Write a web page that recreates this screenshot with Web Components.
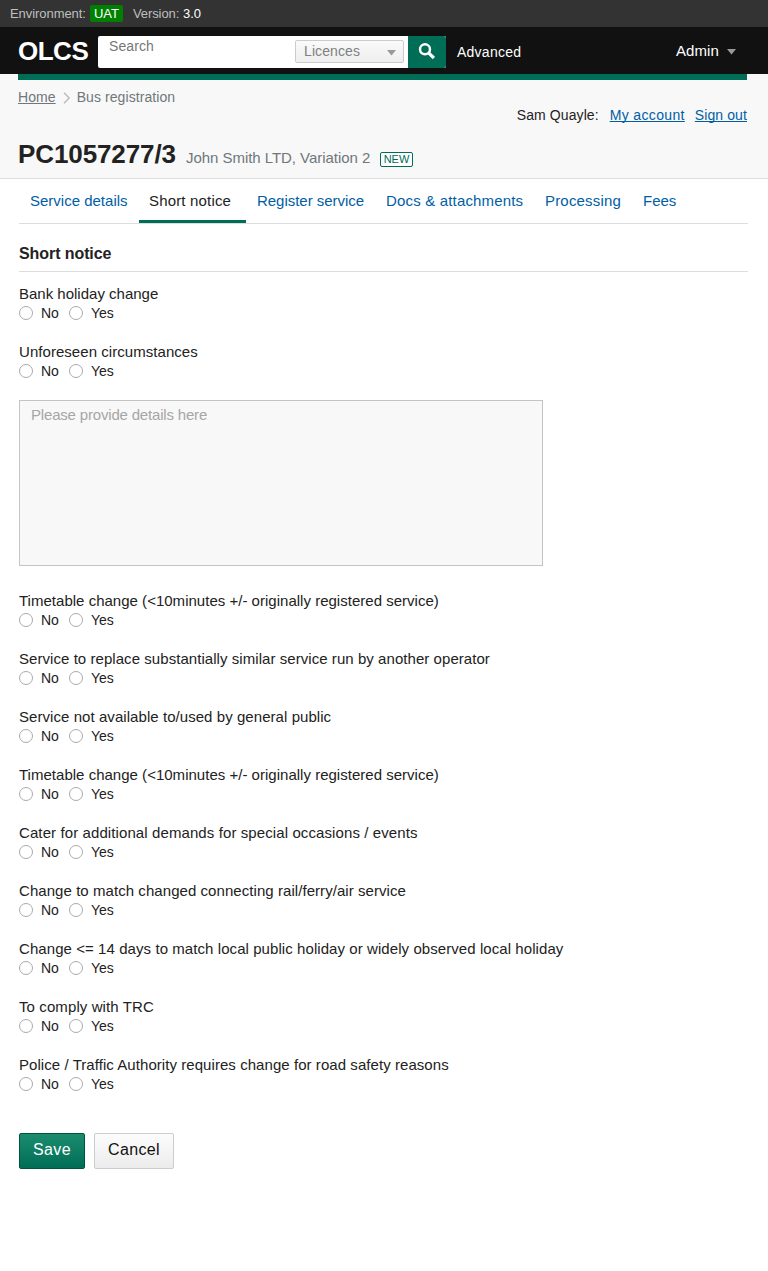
<!DOCTYPE html>
<html lang="en">
<head>
<meta charset="utf-8">
<title>OLCS - Short notice</title>
<style>
html,body{margin:0;background:#fff}
body{font-family:"Liberation Sans",Arial,sans-serif;font-size:15px;line-height:20px;color:#222;min-height:1271px}
</style>
</head>
<body>
<env-bar environment="UAT" version="3.0"></env-bar>
<site-header></site-header>
<page-intro></page-intro>
<nav-tabs>
<nav-tab style="--w:120px">Service details</nav-tab>
<nav-tab style="--w:107px;--ls:.17px" active>Short notice</nav-tab>
<nav-tab style="--w:129px;--ls:-.03px">Register service</nav-tab>
<nav-tab style="--w:159px;--ls:.17px">Docs &amp; attachments</nav-tab>
<nav-tab style="--w:98px;--ls:.18px">Processing</nav-tab>
<nav-tab style="--w:60px">Fees</nav-tab>
</nav-tabs>
<notice-form heading="Short notice">
<radio-field>Bank holiday change</radio-field>
<radio-field style="--ls:.05px">Unforeseen circumstances</radio-field>
<text-box placeholder="Please provide details here"></text-box>
<radio-field style="--ls:.016px">Timetable change (&lt;10minutes +/- originally registered service)</radio-field>
<radio-field style="--ls:.056px">Service to replace substantially similar service run by another operator</radio-field>
<radio-field style="--ls:.06px">Service not available to/used by general public</radio-field>
<radio-field style="--ls:.016px">Timetable change (&lt;10minutes +/- originally registered service)</radio-field>
<radio-field style="--ls:.1px">Cater for additional demands for special occasions / events</radio-field>
<radio-field style="--ls:.06px">Change to match changed connecting rail/ferry/air service</radio-field>
<radio-field style="--ls:.072px">Change &lt;= 14 days to match local public holiday or widely observed local holiday</radio-field>
<radio-field style="--ls:.1px">To comply with TRC</radio-field>
<radio-field style="--ls:.06px">Police / Traffic Authority requires change for road safety reasons</radio-field>
<action-button slot="actions" primary>Save</action-button>
<action-button slot="actions">Cancel</action-button>
</notice-form>
<script>
const define = (name, markup) => customElements.define(name, class extends HTMLElement {
  constructor() {
    super();
    this.attachShadow({ mode: 'open' }).innerHTML = '<style>*,:host{box-sizing:border-box}:host{white-space:nowrap}</style>' + (typeof markup === 'function' ? markup(this) : markup);
  }
});

define('env-bar', el => `<style>
:host{display:flex;align-items:center;height:27px;background:#333;color:#bfbfbf;font-size:13px;line-height:17px;padding-left:10px}
.tag{background:#008000;color:#fff;border-radius:2px;width:33px;text-align:center;margin:0 10px 0 4px}
.v{color:#fff;margin-left:4px}
.e{width:76px;letter-spacing:-.06px}.vl{width:46px;letter-spacing:-.1px}
</style><span class="e">Environment:</span><span class="tag">${el.getAttribute('environment')}</span><span class="vl">Version:</span><span class="v">${el.getAttribute('version')}</span>`);

define('site-header', `<style>
:host{display:flex;height:47px;background:#111;color:#fff;padding:9px 32px 0 18px}
.logo{font-weight:bold;font-size:26px;line-height:30px;width:80px;letter-spacing:-.5px}
.adv{font-size:14px;line-height:33px;margin-left:11px;letter-spacing:.25px}
.admin{margin-left:auto;display:flex;line-height:30px;gap:8px;letter-spacing:.1px}
svg{display:block}
.admin svg{margin-top:13px}
</style><span class="logo">OLCS</span><search-box></search-box><span class="adv">Advanced</span>
<span class="admin"><span>Admin</span><svg width="9" height="6"><path d="M0 0H9L4.5 5.5Z" fill="#999"/></svg></span>`);

define('search-box', `<style>
:host{display:flex;width:348px;height:32px;background:#fff;border-radius:2px;overflow:hidden;font-size:14px;letter-spacing:.1px}
.q{flex:1;padding-left:11px;color:#777;line-height:21px}
.sel{display:flex;justify-content:space-between;width:109px;height:23px;margin:4px 4px 0 0;border:1px solid #ccc;border-radius:2px;background:linear-gradient(#fafafa,#eee);padding:0 7px 0 8px;color:#808080;line-height:21px}
.sel svg{margin-top:9px}
.go{width:38px;background:#006e56;padding:7px 0 0 10px;border-radius:0 2px 2px 0}
svg{display:block}
</style><span class="q">Search</span><span class="sel"><span>Licences</span><svg width="9" height="6"><path d="M0 0H9L4.5 5.5Z" fill="#999"/></svg></span>
<span class="go"><svg width="18" height="18" fill="none" stroke="#fff"><circle cx="7" cy="6.3" r="5" stroke-width="2.5"/><path d="M10.6 9.9L15.9 15" stroke-width="3.2"/></svg></span>`);

define('page-intro', `<style>
:host{display:block;height:105px;background:#f8f8f8;border-bottom:1px solid #ddd;padding:0 21px 0 18px}
.rule{height:6px;background:#006e56}
.row{display:flex;justify-content:space-between;height:59px}
.crumbs{display:flex;font-size:14px;color:#6f777b;padding-top:7px;letter-spacing:.08px}
.crumbs svg{display:block;margin:5px 6px 0 7px}
u{text-underline-offset:1px;text-decoration-skip-ink:none;text-decoration-thickness:1px}
.user{display:flex;font-size:14px;padding-top:25px;letter-spacing:.1px}
.user u{color:#005ea5}.user u:nth-child(2){margin:0 10px 0 11px;letter-spacing:.35px}
.title{display:flex;align-items:baseline}
h1{margin:0;font-size:26px;line-height:30px;width:168px;letter-spacing:-.1px}
.sub{color:#6f777b;width:194px;letter-spacing:-.04px}
.new{font-size:11px;line-height:13px;height:15px;border:1px solid #006e56;color:#006e56;border-radius:2px;width:33px;text-align:center;background:#fff}
</style><div class="rule"></div><div class="row"><div class="crumbs"><u>Home</u><svg width="8" height="12" fill="none" stroke="#b4b8ba" stroke-width="1.3"><path d="M1 .8L6.2 6L1 11.2"/></svg><span>Bus registration</span></div>
<div class="user"><span>Sam Quayle:</span><u>My account</u><u>Sign out</u></div></div>
<div class="title"><h1>PC1057277/3</h1><span class="sub">John Smith LTD, Variation 2</span><span class="new">NEW</span></div>`);

define('nav-tabs', `<style>
:host{display:flex;height:45px;margin:0 20px 0 19px;border-bottom:1px solid #ddd}
</style><slot></slot>`);

define('nav-tab', `<style>
:host{display:block;width:var(--w);height:44px;padding:12px 0 0 11px;color:#005ea5;letter-spacing:var(--ls,0)}
:host([active]){color:#222;border-bottom:3px solid #006e56;padding-left:10px}
</style><slot></slot>`);

define('notice-form', el => `<style>
:host{display:block;margin:0 20px 0 19px}
h2{margin:0 0 12px;font-size:16px;line-height:20px;height:48px;padding-top:20px;border-bottom:1px solid #ddd;letter-spacing:-.08px}
.actions{display:flex;gap:9px;padding-top:20px}
</style><h2>${el.getAttribute('heading')}</h2><slot></slot><div class="actions"><slot name="actions"></slot></div>`);

define('radio-field', `<style>
:host{display:block;height:39px;margin-bottom:19px}
.label{height:19px;letter-spacing:var(--ls,0)}
.opts{display:flex;gap:10px}
</style><div class="label"><slot></slot></div><div class="opts"><radio-option>No</radio-option><radio-option>Yes</radio-option></div>`);

define('radio-option', `<style>
:host{display:flex;gap:8px;font-size:14px}
i{width:14px;height:14px;border:1px solid #aaa;border-radius:50%;background:#fff;margin-top:3px}
</style><i></i><slot></slot>`);

define('text-box', el => `<style>
:host{display:block;width:524px;height:166px;margin-bottom:25px;border:1px solid #c4c4c4;background:#f8f8f8;color:#a6a6a6;padding:4px 11px;letter-spacing:-.18px}
</style><span>${el.getAttribute('placeholder')}</span>`);

define('action-button', `<style>
:host{display:block;width:80px;height:36px;border:1px solid #ccc;border-radius:2px;background:linear-gradient(#fcfcfc,#ececec);color:#111;font-size:16px;line-height:32px;text-align:center;letter-spacing:.35px}
:host([primary]){width:66px;border-color:#00523f;background:linear-gradient(#1c8c6e,#006e56);color:#fff}
</style><slot></slot>`);
</script>
</body>
</html>
